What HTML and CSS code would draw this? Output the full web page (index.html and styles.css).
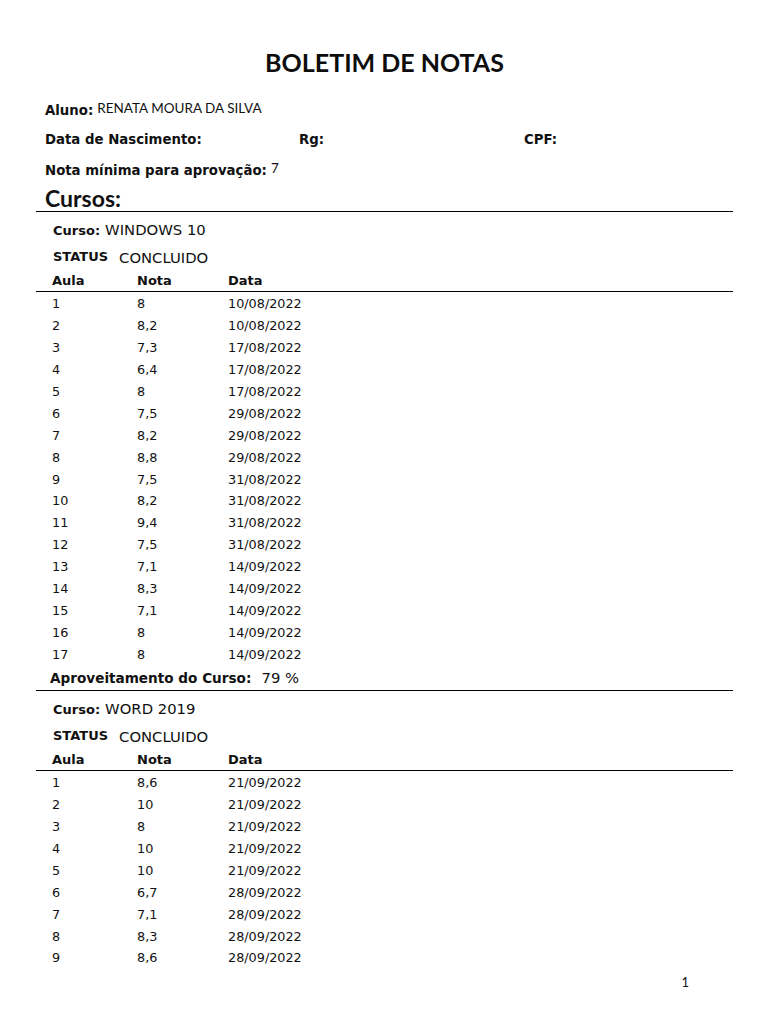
FILE: index.html
```html
<!DOCTYPE html>
<html lang="pt">
<head>
<meta charset="utf-8">
<title>Boletim de Notas</title>
<link rel="stylesheet" href="styles.css">
</head>
<body>
<div class="page">
  <h1 class="title">BOLETIM DE NOTAS</h1>
  <div class="info">
    <div class="info-row"><span class="lbl">Aluno:</span><span class="val-small">RENATA MOURA DA SILVA</span></div>
    <div class="info-row three">
      <span class="lbl c1">Data de Nascimento:</span>
      <span class="lbl c2">Rg:</span>
      <span class="lbl c3">CPF:</span>
    </div>
    <div class="info-row"><span class="lbl">Nota mínima para aprovação:</span><span class="val-small">7</span></div>
  </div>
  <h2 class="cursos">Cursos:</h2>

  <section class="course">
    <div class="course-line"><span class="blbl">Curso:</span> <span class="val">WINDOWS 10</span></div>
    <div class="course-line status"><span class="blbl">STATUS</span><span class="val status-val">CONCLUIDO</span></div>
    <div class="grid head"><span>Aula</span><span>Nota</span><span>Data</span></div>
    <div class="rows">
      <div class="grid"><span>1</span><span>8</span><span>10/08/2022</span></div>
      <div class="grid"><span>2</span><span>8,2</span><span>10/08/2022</span></div>
      <div class="grid"><span>3</span><span>7,3</span><span>17/08/2022</span></div>
      <div class="grid"><span>4</span><span>6,4</span><span>17/08/2022</span></div>
      <div class="grid"><span>5</span><span>8</span><span>17/08/2022</span></div>
      <div class="grid"><span>6</span><span>7,5</span><span>29/08/2022</span></div>
      <div class="grid"><span>7</span><span>8,2</span><span>29/08/2022</span></div>
      <div class="grid"><span>8</span><span>8,8</span><span>29/08/2022</span></div>
      <div class="grid"><span>9</span><span>7,5</span><span>31/08/2022</span></div>
      <div class="grid"><span>10</span><span>8,2</span><span>31/08/2022</span></div>
      <div class="grid"><span>11</span><span>9,4</span><span>31/08/2022</span></div>
      <div class="grid"><span>12</span><span>7,5</span><span>31/08/2022</span></div>
      <div class="grid"><span>13</span><span>7,1</span><span>14/09/2022</span></div>
      <div class="grid"><span>14</span><span>8,3</span><span>14/09/2022</span></div>
      <div class="grid"><span>15</span><span>7,1</span><span>14/09/2022</span></div>
      <div class="grid"><span>16</span><span>8</span><span>14/09/2022</span></div>
      <div class="grid"><span>17</span><span>8</span><span>14/09/2022</span></div>
    </div>
    <div class="aprov"><span class="blbl wide">Aproveitamento do Curso:</span> <span class="val">79 %</span></div>
  </section>

  <section class="course">
    <div class="course-line"><span class="blbl">Curso:</span> <span class="val">WORD 2019</span></div>
    <div class="course-line status"><span class="blbl">STATUS</span><span class="val status-val">CONCLUIDO</span></div>
    <div class="grid head"><span>Aula</span><span>Nota</span><span>Data</span></div>
    <div class="rows">
      <div class="grid"><span>1</span><span>8,6</span><span>21/09/2022</span></div>
      <div class="grid"><span>2</span><span>10</span><span>21/09/2022</span></div>
      <div class="grid"><span>3</span><span>8</span><span>21/09/2022</span></div>
      <div class="grid"><span>4</span><span>10</span><span>21/09/2022</span></div>
      <div class="grid"><span>5</span><span>10</span><span>21/09/2022</span></div>
      <div class="grid"><span>6</span><span>6,7</span><span>28/09/2022</span></div>
      <div class="grid"><span>7</span><span>7,1</span><span>28/09/2022</span></div>
      <div class="grid"><span>8</span><span>8,3</span><span>28/09/2022</span></div>
      <div class="grid"><span>9</span><span>8,6</span><span>28/09/2022</span></div>
    </div>
  </section>

  <div class="page-num">1</div>
</div>
</body>
</html>
```

FILE: styles.css
```css
* { box-sizing: border-box; }
html, body { margin: 0; padding: 0; background: #fff; }
body {
  color: #111;
  font-family: "DejaVu Sans", Verdana, sans-serif;
  width: 768px;
  height: 1024px;
  overflow: hidden;
}
.page {
  padding: 44px 35px 0 36px;
}
.title {
  margin: 0;
  font-family: Lato, "Liberation Sans", sans-serif;
  font-weight: 700;
  font-size: 25px;
  line-height: 36px;
  text-align: center;
  color: #0d0d0d;
}
.info {
  margin-top: 15px;
  padding-left: 9px;
}
.info-row {
  display: flex;
  align-items: baseline;
  height: 30px;
  line-height: 30px;
}
.lbl {
  font-weight: 700;
  font-size: 13.3px;
}
.val-small {
  font-family: Lato, "Liberation Sans", sans-serif;
  font-size: 13.5px;
  margin-left: 4px;
  position: relative;
  top: -2px;
}
.three .c1 { width: 254px; }
.three .c2 { width: 225px; }
.cursos {
  margin: 0;
  font-family: Lato, "Liberation Sans", sans-serif;
  font-weight: 700;
  font-size: 23px;
  line-height: 26px;
  padding-left: 9px;
  border-bottom: 1px solid #000;
}
.course {
  padding-top: 5px;
}
.course + .course {
  border-top: 1px solid #000;
  padding-top: 5px;
}
.course-line {
  height: 26px;
  line-height: 26px;
  padding-left: 17px;
  display: flex;
  align-items: baseline;
}
.blbl {
  font-weight: 700;
  font-size: 13px;
}
.blbl.wide { font-size: 13.6px; }
.val {
  font-size: 14.8px;
  margin-left: 5px;
}
.status-val { margin-left: 11px; position: relative; top: 2px; }
.grid {
  display: grid;
  grid-template-columns: 85px 91px 1fr;
  padding-left: 16px;
  font-size: 12.8px;
  height: 21.94px;
  line-height: 22px;
}
.grid.head {
  font-weight: 700;
  font-size: 13px;
  height: 23px;
  line-height: 23px;
  border-bottom: 1px solid #000;
}
.rows {
  padding-top: 1px;
}
.aprov {
  height: 24px;
  line-height: 24px;
  padding-left: 14px;
}
.page-num {
  font-family: Lato, "Liberation Sans", sans-serif;
  font-size: 13px;
  line-height: 22px;
  text-align: right;
  padding-right: 44px;
  margin-top: 2px;
}
```
